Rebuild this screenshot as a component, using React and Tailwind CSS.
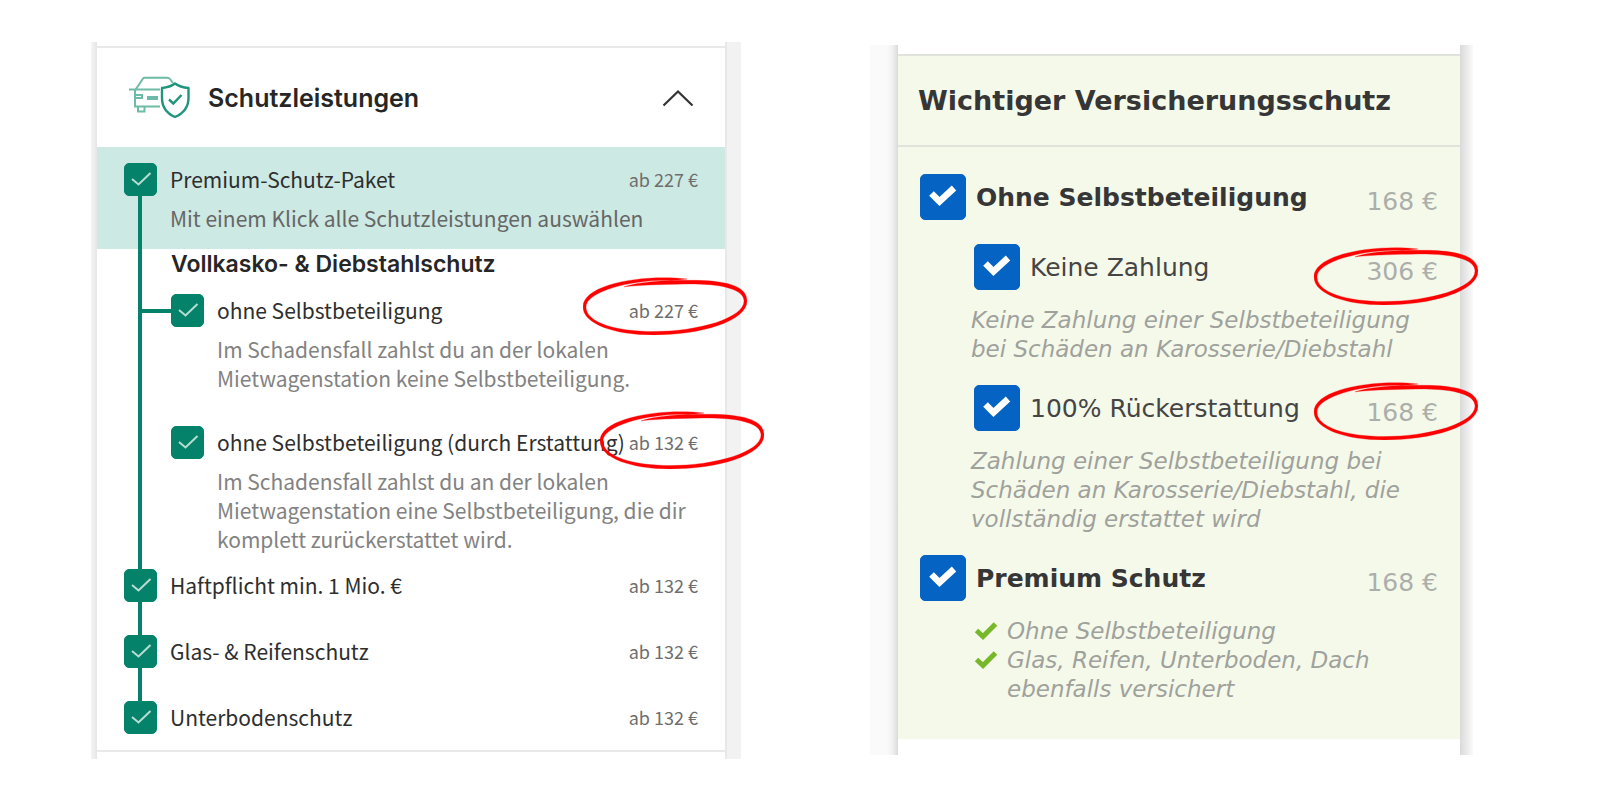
import React, { useState } from "react";

const CarShieldIcon = () => (
  <svg width="62" height="46" viewBox="0 0 62 46" fill="none" aria-hidden="true">
    {/* Car */}
    <g stroke="#6dbba6" strokeWidth="2">
      <path d="M7 15.500L15 3.500Q15.500 2.700 17 2.700H39Q41 2.700 42 4L45 8" />
      <path d="M1 14.500H32" />
      <path d="M7 15V31.500H32" />
      <path d="M7 20H14V23H7" />
      <path d="M19 22H30M19 24H30" />
      <path d="M10 32V36.500H16.500V32" />
    </g>
    {/* Shield */}
    <path
      d="M47 8.500C43 11.500 39 12.500 34 13V23C34 32 39 38.500 47 42C55 38.500 60.500 32 60.500 23V13C55 12.500 51 11.500 47 8.500Z"
      fill="#fff"
      stroke="#1f957c"
      strokeWidth="2.400"
      strokeLinejoin="round"
    />
    <path d="M41 24.500L45.300 28.500L53.500 20" stroke="#1f957c" strokeWidth="2.400" />
  </svg>
);

const Circle = ({ className }) => (
  <svg
    className={`absolute z-20 max-w-none pointer-events-none ${className}`}
    width="164"
    height="58"
    viewBox="0 0 164 58"
    aria-hidden="true"
  >
    <path
      fill="#fe0000"
      stroke="#fe0000"
      strokeWidth="0.300"
      d="M104 2C60 -3 0 7 0 30C0 47 32 58 70 58C118 58 164 44 164 24C164 8 140 3.500 110 3.300C80 3.200 55 5 41 9.800C60 7.800 85 7.200 112 7C140 7.500 161 12.500 161 24C161 41 116 54.500 70 54.500C34 54.500 3 46 3 30C3 15 45 3.500 82 3.300C92 3.200 98 2.800 104 2Z"
    />
  </svg>
);

const GreenCheckbox = ({ id }) => {
  const [checked, setChecked] = useState(true);
  return (
    <span className="relative shrink-0 w-[33px] h-[33px]">
      <input
        type="checkbox"
        id={id}
        checked={checked}
        onChange={(e) => setChecked(e.target.checked)}
        className="block appearance-none w-full h-full rounded-[5px] border border-[#04836a] bg-white checked:bg-[#04836a]"
      />
      {checked && (
        <svg
          className="absolute inset-0 pointer-events-none"
          viewBox="0 0 33 33"
          fill="none"
          aria-hidden="true"
        >
          <path d="M8 16L14.500 21.500L26.500 10" stroke="#b9ddd4" strokeWidth="2" />
        </svg>
      )}
    </span>
  );
};

const BlueCheckbox = ({ id }) => {
  const [checked, setChecked] = useState(true);
  return (
    <span className="relative shrink-0 w-[46px] h-[46px]">
      <input
        type="checkbox"
        id={id}
        checked={checked}
        onChange={(e) => setChecked(e.target.checked)}
        className="block appearance-none w-full h-full rounded-[5px] border border-[#0563c3] bg-white checked:bg-[#0563c3]"
      />
      {checked && (
        <svg
          className="absolute inset-0 pointer-events-none"
          viewBox="0 0 46 46"
          fill="none"
          aria-hidden="true"
        >
          <path
            d="M11.500 19.500L19.500 27.500L34 14"
            stroke="#fff"
            strokeWidth="6.500"
          />
        </svg>
      )}
    </span>
  );
};

const CoverRow = ({ id, title, price, circle }) => (
  <div className="flex items-center">
    <GreenCheckbox id={id} />
    <label htmlFor={id} className="ml-[13px] flex-1 whitespace-nowrap text-[21px] leading-[33px] text-[#2e2e2e]">
      {title}
    </label>
    <span className="relative whitespace-nowrap text-[18px] leading-[33px] text-[#6e6e6e]">
      {price}
      {circle && <Circle className={circle} />}
    </span>
  </div>
);

const InsuranceRow = ({ id, title, price, bold, circle }) => (
  <div className="flex items-center">
    <BlueCheckbox id={id} />
    <label
      htmlFor={id}
      className={`ml-[10px] pt-[2px] flex-1 whitespace-nowrap text-[25px] ${
        bold ? "font-bold text-[#363636]" : "text-[#454545]"
      }`}
    >
      {title}
    </label>
    <span className="relative self-end whitespace-nowrap text-[25px] leading-9 text-[#acaeaa]">
      {price}
      {circle && <Circle className={circle} />}
    </span>
  </div>
);

const GreenTick = () => (
  <svg className="shrink-0 mt-1" width="24" height="20" viewBox="0 0 24 20" fill="none" aria-hidden="true">
    <path d="M2.500 9.500L9 15.500L21.500 3" stroke="#76b82a" strokeWidth="5" />
  </svg>
);

const ProtectionPanel = () => (
  <section className="flex font-['Noto_Sans_CJK_SC',sans-serif]">
    <div className="w-[6px] bg-linear-to-r from-[#f4f4f4] to-[#e6e6e6]" />
    <div className="flex-1 min-w-0 pt-1 pb-[7px] bg-white">
      <div className="border-y-2 border-[#e9e9e9]">
        <header className="flex items-center h-[99px] pl-[31px] pr-[31px]">
          <CarShieldIcon />
          <h2 className="ml-[18px] pt-[2px] flex-1 font-['Inter',sans-serif] font-semibold text-[25px] text-[#262626]">
            Schutzleistungen
          </h2>
          <button type="button" aria-label="Schutzleistungen einklappen">
            <svg width="32" height="18" viewBox="0 0 32 18" fill="none" aria-hidden="true">
              <path d="M1.500 16.500L16 2.500L30.500 16.500" stroke="#333" strokeWidth="2.200" />
            </svg>
          </button>
        </header>

        <div className="relative pb-4">
          {/* Connector between the checkboxes */}
          <span className="absolute left-[41px] top-[49px] bottom-[49px] w-1 bg-[#04836a]" />

          <div className="pt-4 pb-4 pl-[27px] pr-[27px] bg-[#cde9e3]">
            <CoverRow id="paket" title="Premium-Schutz-Paket" price="ab 227 €" />
            <p className="mt-2 ml-[46px] text-[21px] leading-[29px] text-[#666]">
              Mit einem Klick alle Schutzleistungen auswählen
            </p>
          </div>

          <div className="pl-[74px] pr-[27px]">
            <h3 className="font-['Inter',sans-serif] font-semibold text-[23px] leading-[30px] text-[#262626]">
              Vollkasko- &amp; Diebstahlschutz
            </h3>
            <div className="relative mt-[15px]">
              <span className="absolute right-full top-[15px] w-[30px] h-1 bg-[#04836a]" />
              <CoverRow
                id="ohne-sb"
                title="ohne Selbstbeteiligung"
                price="ab 227 €"
                circle="-right-[49px] -top-[17px]"
              />
            </div>
            <p className="mt-2 ml-[46px] text-[21px] leading-[29px] text-[#828282]">
              Im Schadensfall zahlst du an der lokalen Mietwagenstation keine Selbstbeteiligung.
            </p>
            <div className="mt-[33px]">
              <CoverRow
                id="erstattung"
                title="ohne Selbstbeteiligung (durch Erstattung)"
                price="ab 132 €"
                circle="-right-[66px] -top-[15px]"
              />
            </div>
            <p className="mt-2 ml-[46px] text-[21px] leading-[29px] text-[#828282]">
              Im Schadensfall zahlst du an der lokalen Mietwagenstation eine Selbstbeteiligung, die dir komplett
              zurückerstattet wird.
            </p>
          </div>

          <div className="flex flex-col gap-[33px] mt-[15px] pl-[27px] pr-[27px]">
            <CoverRow id="haftpflicht" title="Haftpflicht min. 1 Mio. €" price="ab 132 €" />
            <CoverRow id="glas" title="Glas- & Reifenschutz" price="ab 132 €" />
            <CoverRow id="unterboden" title="Unterbodenschutz" price="ab 132 €" />
          </div>
        </div>
      </div>
    </div>
    <div className="w-4 border-l-2 border-[#e8e8e8] bg-[#f2f2f2]" />
  </section>
);

const InsurancePanel = () => (
  <section className="flex mt-[3px] font-['DejaVu_Sans',sans-serif]">
    <div className="w-7 bg-linear-to-r from-[#fafafa] from-60% via-[#f0f0f0] via-80% to-[#dadada]" />
    <div className="flex-1 min-w-0 pt-[9px] pb-4 bg-white">
      <h2 className="flex items-center h-[93px] pt-[2px] pl-5 border-y-2 border-[#e0e2dc] bg-[#f5f9ea] whitespace-nowrap font-bold text-[27px] text-[#363636]">
        Wichtiger Versicherungsschutz
      </h2>
      <div className="pt-[27px] pb-[35px] pl-[22px] pr-[22px] bg-[#f5f9ea]">
        <InsuranceRow id="ohne" title="Ohne Selbstbeteiligung" price="168 €" bold />
        <div className="mt-6 ml-[54px]">
          <InsuranceRow id="zahlung" title="Keine Zahlung" price="306 €" circle="-right-[40px] -top-[7px]" />
        </div>
        <p className="mt-4 ml-[51px] italic text-[23px] leading-[29px] text-[#9fa19c]">
          Keine Zahlung einer Selbstbeteiligung
          <br />
          bei Schäden an Karosserie/Diebstahl
        </p>
        <div className="mt-[21px] ml-[54px]">
          <InsuranceRow
            id="rueckerstattung"
            title="100% Rückerstattung"
            price="168 €"
            circle="-right-[40px] -top-[13px]"
          />
        </div>
        <p className="mt-4 ml-[51px] italic text-[23px] leading-[29px] text-[#9fa19c]">
          Zahlung einer Selbstbeteiligung bei
          <br />
          Schäden an Karosserie/Diebstahl, die
          <br />
          vollständig erstattet wird
        </p>
        <div className="mt-[21px]">
          <InsuranceRow id="premium" title="Premium Schutz" price="168 €" bold />
        </div>
        <ul className="mt-4 ml-[54px] italic text-[23px] leading-[29px] text-[#9fa19c]">
          <li className="flex gap-[9px]">
            <GreenTick />
            Ohne Selbstbeteiligung
          </li>
          <li className="flex gap-[9px]">
            <GreenTick />
            <span>
              Glas, Reifen, Unterboden, Dach
              <br />
              ebenfalls versichert
            </span>
          </li>
        </ul>
      </div>
    </div>
    <div className="w-[13px] bg-linear-to-r from-[#dadada] to-[#fafafa]" />
  </section>
);

const App = () => {
  return (
    <main className="grid grid-cols-[650fr_603fr] items-start gap-[129px] min-h-screen pt-[42px] pl-[91px] pr-[127px] bg-white">
      <ProtectionPanel />
      <InsurancePanel />
    </main>
  );
};

export default App;
